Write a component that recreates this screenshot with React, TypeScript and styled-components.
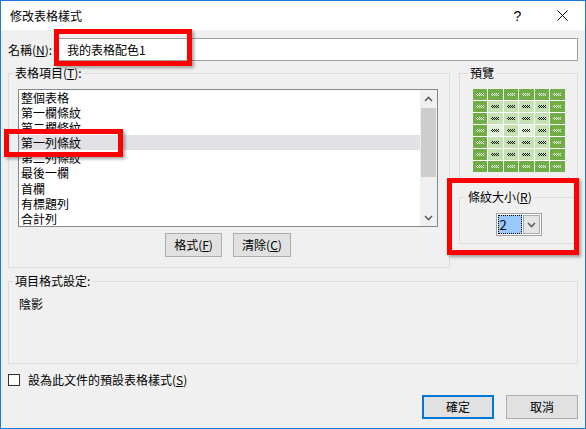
import React from "react";
import styled, { createGlobalStyle } from "styled-components";

const GlobalStyle = createGlobalStyle`
  html, body {
    margin: 0;
    padding: 0;
    background: #ffffff;
  }
  body {
    font-family: "Noto Sans CJK TC", "Noto Sans", sans-serif;
    font-size: 12px;
    color: #000;
  }
`;

const Window = styled.div`
  position: relative;
  width: 586px;
  height: 429px;
  box-sizing: border-box;
  border: 1px solid #1c7bd4;
  background: #f0f0f0;
  display: flex;
  flex-direction: column;
  overflow: hidden;
`;

const TitleBar = styled.div`
  height: 29px;
  flex-shrink: 0;
  background: #ffffff;
  display: flex;
  align-items: center;
  padding-left: 9px;
`;

const Title = styled.div`
  flex: 1;
  line-height: 14px;
`;

const TitleButton = styled.div`
  width: 45px;
  height: 29px;
  display: flex;
  align-items: center;
  justify-content: center;
  font-family: "Liberation Sans", sans-serif;
  font-size: 14px;
`;

const Body = styled.div`
  flex: 1;
  display: flex;
  flex-direction: column;
  padding: 8px 7px 0 7px;
`;

const NameRow = styled.div`
  display: flex;
  align-items: center;
  height: 23px;
`;

const NameLabel = styled.div`
  width: 50px;
  line-height: 14px;
`;

const NameInput = styled.div`
  flex: 1;
  height: 23px;
  box-sizing: border-box;
  border: 1px solid #a0a0a0;
  background: #ffffff;
  padding-left: 8px;
  display: flex;
  align-items: center;
  line-height: 14px;
`;

const MainRow = styled.div`
  display: flex;
  gap: 9px;
  margin-top: 5px;
  height: 202px;
`;

const Group = styled.fieldset<{ $width?: number; $height?: number }>`
  margin: 0;
  padding: 0;
  min-width: 0;
  box-sizing: border-box;
  border: 1px solid #dcdcdc;
  width: ${(p) => (p.$width ? `${p.$width}px` : "auto")};
  height: ${(p) => (p.$height ? `${p.$height}px` : "auto")};
  display: flex;
  flex-direction: column;
`;

const Legend = styled.legend<{ $offset: number }>`
  margin-left: ${(p) => p.$offset}px;
  padding: 0 2px;
  line-height: 14px;
  font-size: 12px;
`;

const GroupBody = styled.div<{ $pad: string }>`
  display: flex;
  flex-direction: column;
  padding: ${(p) => p.$pad};
`;

const ListBox = styled.div`
  margin-top: 9px;
  height: 138px;
  box-sizing: border-box;
  border: 1px solid #828790;
  background: #ffffff;
  display: flex;
  overflow: hidden;
`;

const Items = styled.div`
  flex: 1;
  overflow: hidden;
`;

const Item = styled.div<{ $selected?: boolean }>`
  height: 15.1px;
  line-height: 15.1px;
  padding-left: 2px;
  white-space: nowrap;
  background: ${(p) => (p.$selected ? "#e1e1e6" : "transparent")};
`;

const ScrollBar = styled.div`
  width: 17px;
  background: #f0f0f0;
  display: flex;
  flex-direction: column;
`;

const ScrollArrow = styled.div`
  height: 17px;
  display: flex;
  align-items: center;
  justify-content: center;
`;

const ScrollThumb = styled.div`
  margin: 1px 1px 0 1px;
  height: 69px;
  background: #cdcdcd;
`;

const ScrollTrack = styled.div`
  flex: 1;
`;

const ButtonRow = styled.div<{ $justify: string; $gap: number; $top: number }>`
  display: flex;
  justify-content: ${(p) => p.$justify};
  gap: ${(p) => p.$gap}px;
  margin-top: ${(p) => p.$top}px;
`;

const Button = styled.div<{ $width: number; $default?: boolean }>`
  width: ${(p) => p.$width}px;
  height: 24px;
  box-sizing: border-box;
  background: #e1e1e1;
  border: ${(p) => (p.$default ? "2px solid #0078d7" : "1px solid #adadad")};
  display: flex;
  align-items: center;
  justify-content: center;
  line-height: 14px;
`;

const RightColumn = styled.div`
  width: 119px;
  display: flex;
  flex-direction: column;
  gap: 8px;
`;

const PreviewGrid = styled.div`
  align-self: center;
  margin-top: 9px;
  display: grid;
  grid-template-columns: repeat(6, 14.5px);
  grid-template-rows: repeat(7, 11px);
  gap: 1px;
  background: #ffffff;
`;

const Cell = styled.div<{ $tone: "dark" | "light" | "pale" }>`
  background: ${(p) =>
    p.$tone === "dark" ? "#70ad47" : p.$tone === "light" ? "#c5e0b3" : "#e2efd9"};
  display: flex;
  align-items: center;
  justify-content: center;
`;

const CellMark = styled.span<{ $white: boolean }>`
  width: 8px;
  height: 3px;
  opacity: ${(p) => (p.$white ? 0.85 : 0.9)};
  background: repeating-conic-gradient(
      ${(p) => (p.$white ? "#ffffff" : "#000000")} 0 25%,
      transparent 0 50%
    )
    0 0 / 2px 2px;
`;

const Combo = styled.div`
  align-self: center;
  margin-top: 9px;
  width: 46px;
  height: 23px;
  box-sizing: border-box;
  border: 1px solid #a0a0a0;
  background: #ffffff;
  padding: 1px;
  display: flex;
  gap: 1px;
`;

const ComboValue = styled.div`
  width: 25px;
  box-sizing: border-box;
  background: #99c9ff;
  border: 1px dotted #000;
  padding-left: 1px;
  line-height: 17px;
  font-size: 13px;
`;

const ComboButton = styled.div`
  width: 17px;
  box-sizing: border-box;
  background: #e5e5e5;
  border: 1px solid #acacac;
  display: flex;
  align-items: center;
  justify-content: center;
`;

const FormatGroupWrap = styled.div`
  margin-top: 6px;
  display: flex;
  flex-direction: column;
`;

const FormatText = styled.div`
  margin-top: 9px;
  line-height: 14px;
`;

const CheckRow = styled.div`
  display: flex;
  align-items: center;
  gap: 8px;
  margin-top: 9px;
  height: 13px;
`;

const CheckBox = styled.div`
  width: 12px;
  height: 12px;
  box-sizing: border-box;
  border: 1px solid #333333;
  background: #ffffff;
`;

const CheckLabel = styled.div`
  line-height: 14px;
`;

const Highlight = styled.div<{ $x: number; $y: number; $w: number; $h: number }>`
  position: absolute;
  left: ${(p) => p.$x}px;
  top: ${(p) => p.$y}px;
  width: ${(p) => p.$w}px;
  height: ${(p) => p.$h}px;
  box-sizing: border-box;
  border: 5px solid #ff0000;
  box-shadow: 2px 2px 3px rgba(0, 0, 0, 0.35);
  pointer-events: none;
`;

const Chevron = ({ up }: { up?: boolean }) => (
  <svg width="9" height="6" viewBox="0 0 9 6">
    <polyline
      points={up ? "1,5 4.5,1.5 8,5" : "1,1 4.5,4.5 8,1"}
      fill="none"
      stroke="#606060"
      strokeWidth="1.6"
    />
  </svg>
);

const items = [
  "整個表格",
  "第一欄條紋",
  "第二欄條紋",
  "第一列條紋",
  "第二列條紋",
  "最後一欄",
  "首欄",
  "有標題列",
  "合計列",
];

const toneFor = (row: number, col: number): "dark" | "light" | "pale" => {
  if (row === 0 || row === 6 || col === 0 || col === 5) return "dark";
  if (row === 3 && (col === 1 || col === 3)) return "pale";
  return "light";
};

const App = () => {
  return (
    <>
      <GlobalStyle />
      <Window>
        <TitleBar>
          <Title>修改表格樣式</Title>
          <TitleButton>?</TitleButton>
          <TitleButton>
            <svg width="11" height="11" viewBox="0 0 11 11">
              <path d="M0.5 0.5 L10.5 10.5 M10.5 0.5 L0.5 10.5" stroke="#000" strokeWidth="1" />
            </svg>
          </TitleButton>
        </TitleBar>

        <Body>
          <NameRow>
            <NameLabel>
              名稱(<u>N</u>):
            </NameLabel>
            <NameInput>我的表格配色1</NameInput>
          </NameRow>

          <MainRow>
            <Group $width={442}>
              <Legend $offset={4}>
                表格項目(<u>T</u>):
              </Legend>
              <GroupBody $pad="0 11px 0 9px">
                <ListBox>
                  <Items>
                    {items.map((label) => (
                      <Item key={label} $selected={label === "第一列條紋"}>
                        {label}
                      </Item>
                    ))}
                  </Items>
                  <ScrollBar>
                    <ScrollArrow>
                      <Chevron up />
                    </ScrollArrow>
                    <ScrollThumb />
                    <ScrollTrack />
                    <ScrollArrow>
                      <Chevron />
                    </ScrollArrow>
                  </ScrollBar>
                </ListBox>
                <ButtonRow $justify="center" $gap={11} $top={6}>
                  <Button $width={57}>
                    格式(<u>F</u>)
                  </Button>
                  <Button $width={58}>
                    清除(<u>C</u>)
                  </Button>
                </ButtonRow>
              </GroupBody>
            </Group>

            <RightColumn>
              <Group $height={116}>
                <Legend $offset={8}>預覽</Legend>
                <PreviewGrid>
                  {Array.from({ length: 7 }).map((_, r) =>
                    Array.from({ length: 6 }).map((__, c) => {
                      const tone = toneFor(r, c);
                      return (
                        <Cell key={`${r}-${c}`} $tone={tone}>
                          <CellMark $white={tone === "dark"} />
                        </Cell>
                      );
                    })
                  )}
                </PreviewGrid>
              </Group>
              <Group $height={54}>
                <Legend $offset={6}>
                  條紋大小(<u>R</u>)
                </Legend>
                <Combo>
                  <ComboValue>2</ComboValue>
                  <ComboButton>
                    <Chevron />
                  </ComboButton>
                </Combo>
              </Group>
            </RightColumn>
          </MainRow>

          <FormatGroupWrap>
            <Group $height={90}>
              <Legend $offset={4}>項目格式設定:</Legend>
              <GroupBody $pad="0 0 0 10px">
                <FormatText>陰影</FormatText>
              </GroupBody>
            </Group>
          </FormatGroupWrap>

          <CheckRow>
            <CheckBox />
            <CheckLabel>
              設為此文件的預設表格樣式(<u>S</u>)
            </CheckLabel>
          </CheckRow>

          <ButtonRow $justify="flex-end" $gap={12} $top={9}>
            <Button $width={72} $default>
              確定
            </Button>
            <Button $width={72}>取消</Button>
          </ButtonRow>
        </Body>

        <Highlight $x={53} $y={28} $w={138} $h={37} />
        <Highlight $x={3} $y={128} $w={119} $h={28} />
        <Highlight $x={446} $y={177} $w={132} $h={77} />
      </Window>
    </>
  );
};

export default App;
